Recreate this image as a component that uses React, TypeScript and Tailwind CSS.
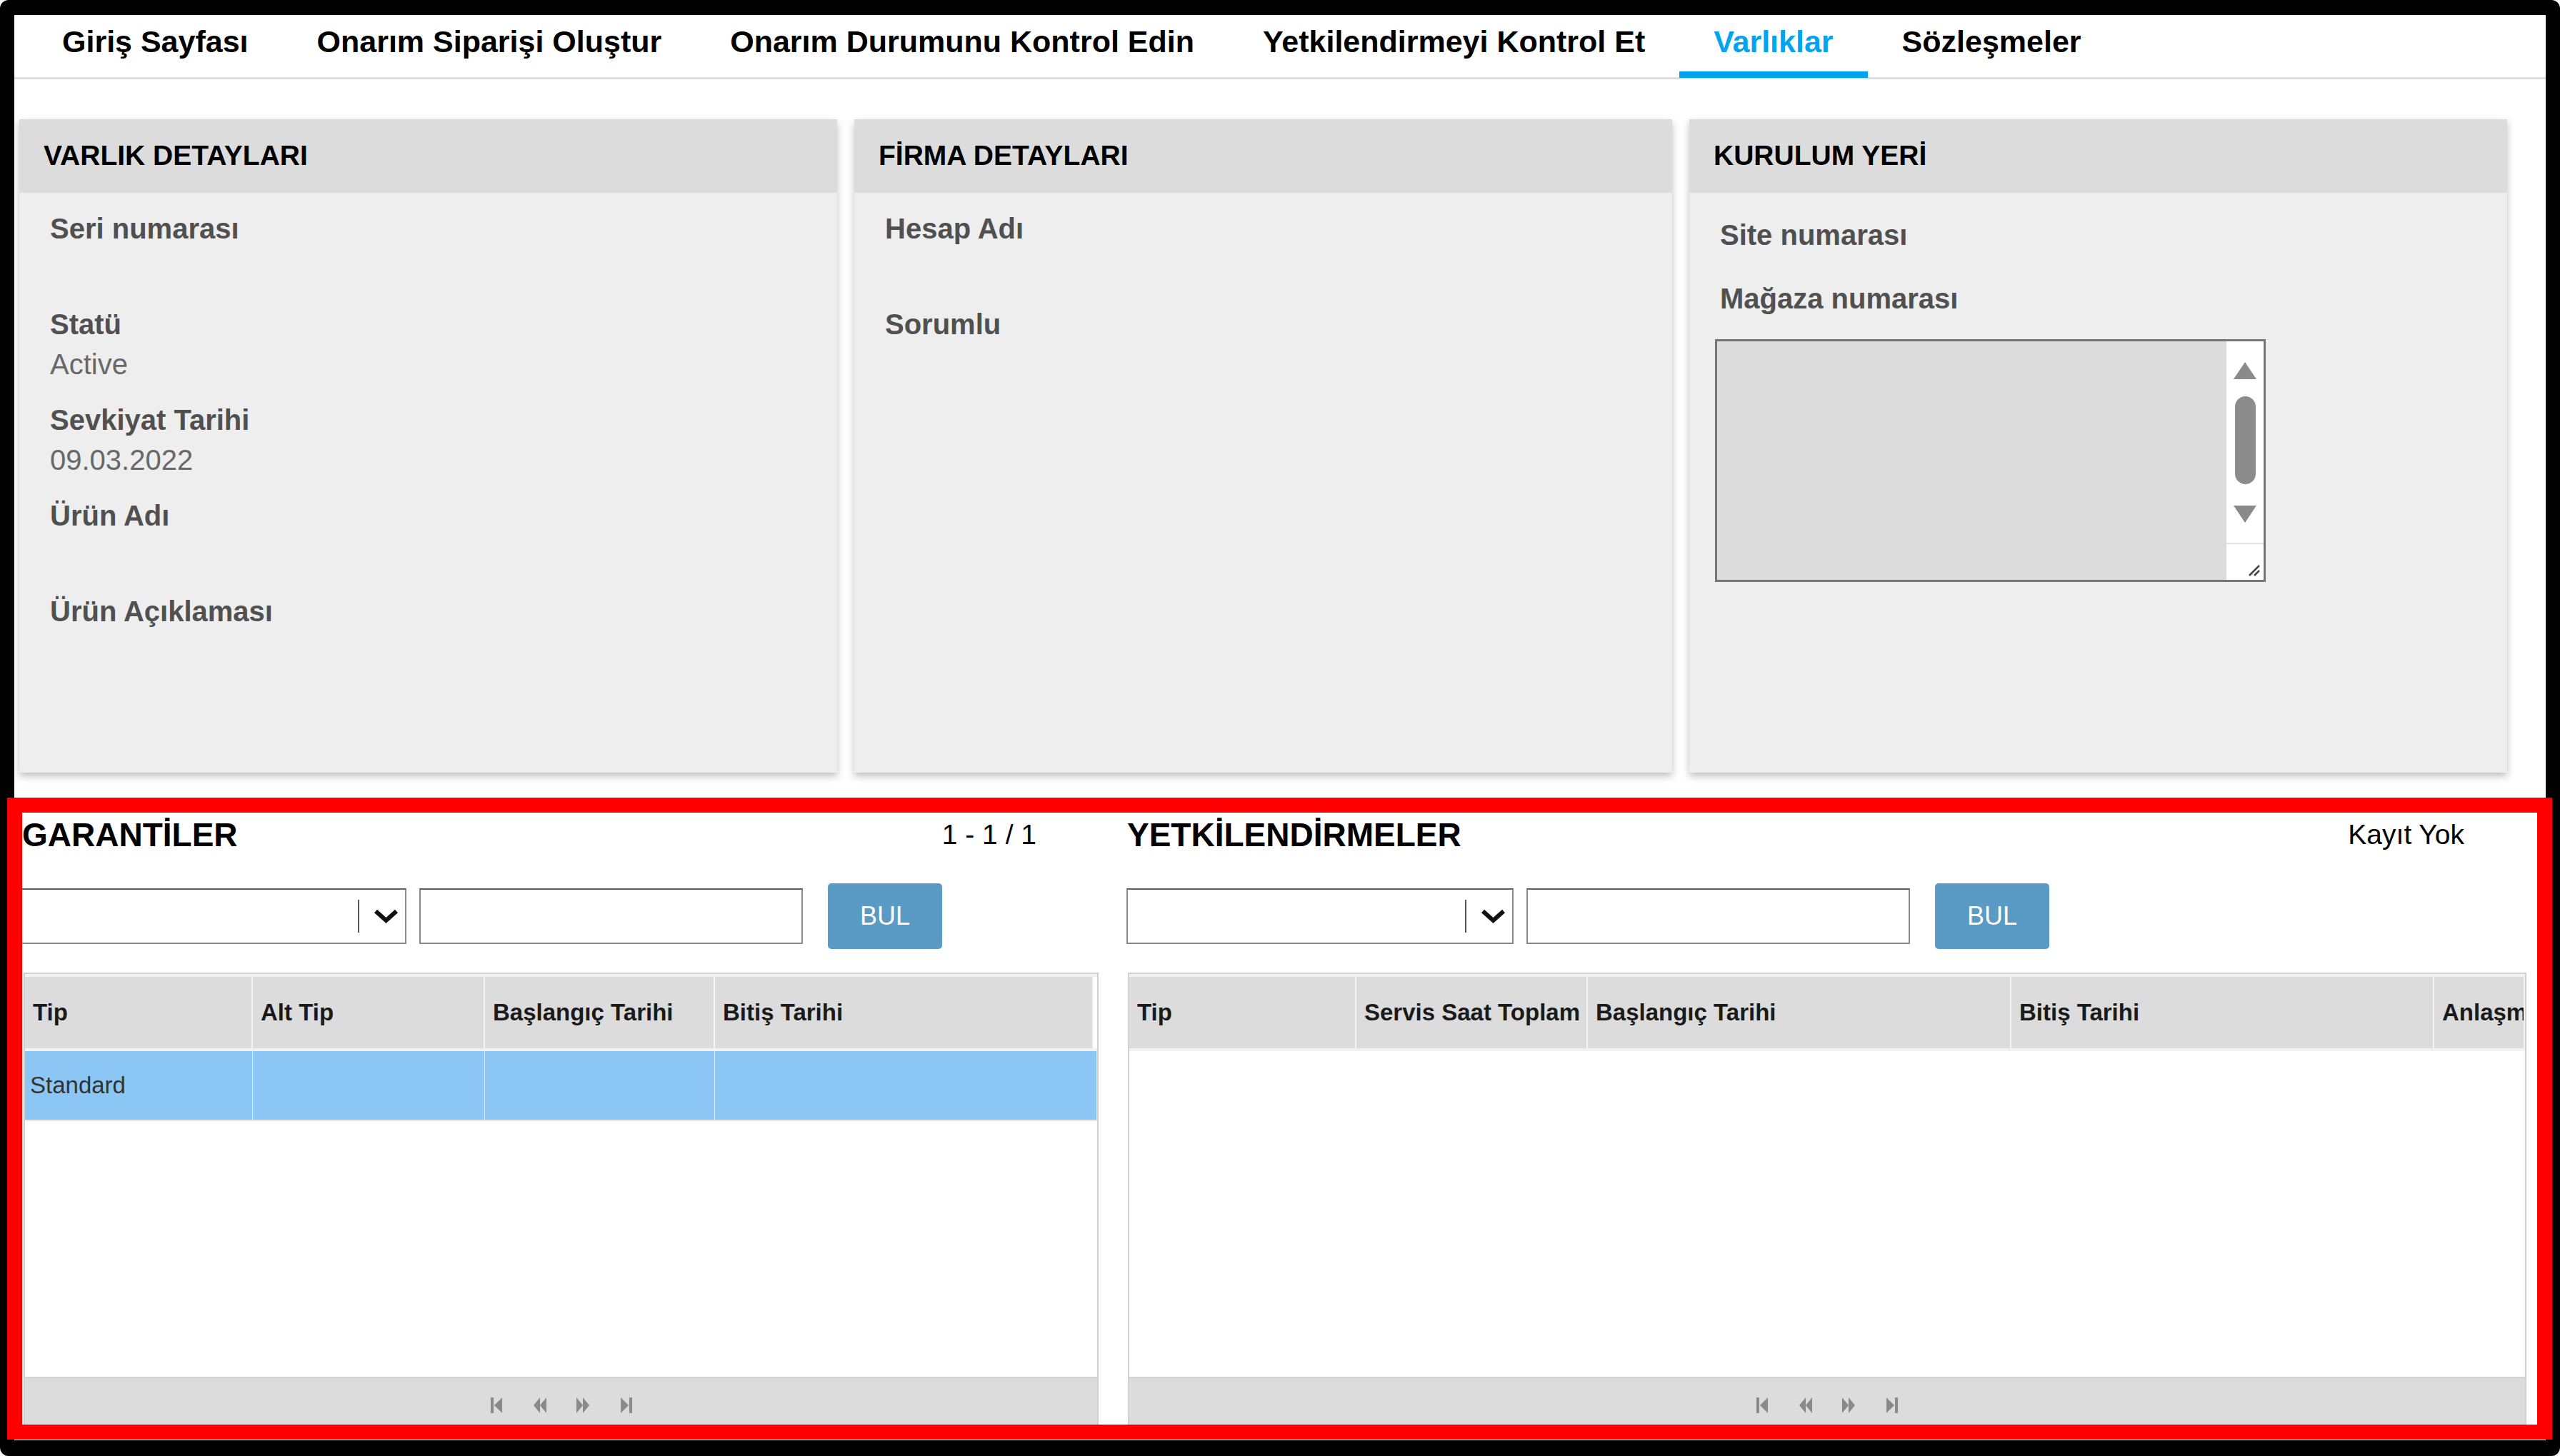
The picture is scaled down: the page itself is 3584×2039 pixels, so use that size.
import React from 'react';

const tabs = [
  'Giriş Sayfası',
  'Onarım Siparişi Oluştur',
  'Onarım Durumunu Kontrol Edin',
  'Yetkilendirmeyi Kontrol Et',
  'Varlıklar',
  'Sözleşmeler',
];

const NavTab = ({ label, active }: { label: string; active?: boolean }) => (
  <div className="relative flex h-full items-center px-[48px] pb-[12px]">
    <span className={`whitespace-nowrap text-[43px] font-bold leading-none ${active ? 'text-[#03a4ef]' : 'text-black'}`}>
      {label}
    </span>
    {active && <div className="absolute right-0 bottom-[-1px] left-0 h-[9px] bg-[#03a4ef]" />}
  </div>
);

const Card = ({ title, children }: { title: string; children: React.ReactNode }) => (
  <div className="flex w-[1145px] flex-col shadow-[0_5px_10px_rgba(0,0,0,0.25)]">
    <div className="flex h-[103px] shrink-0 items-center bg-[#dcdcdc] pl-[34px] text-[39px] font-bold text-black">
      {title}
    </div>
    <div className="flex-1 bg-[#eeeeee]">{children}</div>
  </div>
);

const Field = ({ label, value }: { label: string; value?: string }) => (
  <div className="mb-[22px]">
    <div className="h-[54px] whitespace-nowrap text-[40px] font-bold leading-[54px] text-[#505050]">{label}</div>
    <div className="h-[58px] whitespace-nowrap text-[40px] leading-[58px] text-[#686868]">{value}</div>
  </div>
);

const ChevronDown = () => (
  <svg className="ml-[18px]" width="39" height="22" viewBox="0 0 39 22">
    <polyline points="5,4 19.5,17 34,4" fill="none" stroke="#111" strokeWidth="6" />
  </svg>
);

const PagerIcon = ({ kind }: { kind: 'first' | 'prev' | 'next' | 'last' }) => (
  <svg width="24" height="24" viewBox="0 0 24 24" fill="#8a8a8a">
    {kind === 'first' && (
      <>
        <rect x="3" y="1" width="4" height="22" />
        <polygon points="19,1 8,12 19,23" />
      </>
    )}
    {kind === 'prev' && (
      <>
        <polygon points="12,1 3,12 12,23" />
        <polygon points="21,1 12,12 21,23" />
      </>
    )}
    {kind === 'next' && (
      <>
        <polygon points="3,1 12,12 3,23" />
        <polygon points="12,1 21,12 12,23" />
      </>
    )}
    {kind === 'last' && (
      <>
        <polygon points="5,1 16,12 5,23" />
        <rect x="17" y="1" width="4" height="22" />
      </>
    )}
  </svg>
);

type Col = { label: string; w: string };

const Section = ({
  title,
  status,
  width,
  titleIndent,
  gridIndent,
  cols,
  rows,
}: {
  title: string;
  status: string;
  width: string;
  titleIndent: string;
  gridIndent: string;
  cols: Col[];
  rows: string[][];
}) => (
  <div className={`flex flex-col ${width}`}>
    <div className="flex h-[78px] shrink-0 items-center justify-between pr-[87px]">
      <span className={`text-[46px] font-bold text-black ${titleIndent}`}>{title}</span>
      <span className="text-[39px] text-black">{status}</span>
    </div>

    <div className="mt-[29px] flex h-[92px] shrink-0 items-center">
      <div className="flex h-[78px] w-[542px] items-center justify-end border-2 border-[#8a8a8a] border-t-[#5f5f5f] bg-white pr-[7px]">
        <div className="h-[46px] w-[2px] bg-[#555555]" />
        <ChevronDown />
      </div>
      <div className="ml-[18px] h-[78px] w-[537px] border-2 border-[#8a8a8a] border-t-[#5f5f5f] bg-white" />
      <button className="ml-[35px] flex h-[92px] w-[160px] items-center justify-center rounded-[5px] bg-[#5a9bc6] text-[36px] text-white">
        BUL
      </button>
    </div>

    <div className={`mt-[33px] flex flex-1 flex-col border-2 border-[#d0d0d0] bg-white ${gridIndent}`}>
      <div className="flex h-[108px] shrink-0 border-y-4 border-[#f2f2f2] bg-white">
        {cols.map((c, i) => (
          <div
            key={i}
            className={`flex h-full items-center overflow-hidden whitespace-nowrap border-r-2 border-[#f4f4f4] bg-[#dcdcdc] pl-[11px] text-[33px] font-bold text-[#1a1a1a] ${c.w}`}
          >
            {c.label}
          </div>
        ))}
      </div>
      {rows.map((r, ri) => (
        <div key={ri} className="flex h-[98px] shrink-0 border-b-2 border-[#e6e6e6] bg-[#8cc6f4]">
          {cols.map((c, ci) => (
            <div
              key={ci}
              className={`flex h-full items-center border-r border-[#dbeafc] pl-[7px] text-[33px] text-[#333333] ${ci === cols.length - 1 ? 'flex-1' : c.w}`}
            >
              {r[ci]}
            </div>
          ))}
        </div>
      ))}
      <div className="flex-1" />
      <div className="flex h-[78px] shrink-0 items-center justify-center gap-[36px] border-t-2 border-[#d2d2d2] bg-[#dcdcdc]">
        <PagerIcon kind="first" />
        <PagerIcon kind="prev" />
        <PagerIcon kind="next" />
        <PagerIcon kind="last" />
      </div>
    </div>
  </div>
);

const App = () => {
  const warrantyCols: Col[] = [
    { label: 'Tip', w: 'w-[319px]' },
    { label: 'Alt Tip', w: 'w-[325px]' },
    { label: 'Başlangıç Tarihi', w: 'w-[322px]' },
    { label: 'Bitiş Tarihi', w: 'w-[530px]' },
  ];
  const authCols: Col[] = [
    { label: 'Tip', w: 'w-[318px]' },
    { label: 'Servis Saat Toplam', w: 'w-[324px]' },
    { label: 'Başlangıç Tarihi', w: 'w-[593px]' },
    { label: 'Bitiş Tarihi', w: 'w-[592px]' },
    { label: 'Anlaşma', w: 'flex-1' },
  ];

  return (
    <div className="relative h-[2039px] w-[3584px] overflow-hidden rounded-[12px] bg-black pt-[21px] pr-[20px] pb-[22px] pl-[20px] font-['Liberation_Sans',Arial,sans-serif]">
      <div className="flex h-full flex-col bg-white">
        {/* top navigation */}
        <div className="flex h-[90px] shrink-0 border-b-[3px] border-[#dedede] pl-[19px]">
          {tabs.map((t) => (
            <NavTab key={t} label={t} active={t === 'Varlıklar'} />
          ))}
        </div>

        {/* detail cards */}
        <div className="mt-[56px] flex h-[915px] shrink-0 gap-[24px] pl-[7px]">
          <Card title="VARLIK DETAYLARI">
            <div className="pt-[23px] pl-[43px]">
              <Field label="Seri numarası" />
              <Field label="Statü" value="Active" />
              <Field label="Sevkiyat Tarihi" value="09.03.2022" />
              <Field label="Ürün Adı" />
              <Field label="Ürün Açıklaması" />
            </div>
          </Card>
          <Card title="FİRMA DETAYLARI">
            <div className="pt-[23px] pl-[43px]">
              <Field label="Hesap Adı" />
              <Field label="Sorumlu" />
            </div>
          </Card>
          <Card title="KURULUM YERİ">
            <div className="flex flex-col pt-[32px] pl-[36px]">
              <div className="h-[54px] pl-[7px] text-[40px] font-bold leading-[54px] text-[#505050]">Site numarası</div>
              <div className="mt-[35px] h-[54px] pl-[7px] text-[40px] font-bold leading-[54px] text-[#505050]">Mağaza numarası</div>
              <div className="mt-[30px] flex h-[340px] w-[771px] border-[3px] border-[#767676] bg-[#dcdcdc]">
                <div className="flex-1" />
                <div className="flex w-[52px] flex-col bg-white">
                  <div className="flex flex-1 flex-col items-center pt-[28px]">
                    <svg width="34" height="26" viewBox="0 0 34 26">
                      <polygon points="17,1 33,25 1,25" fill="#8a8a8a" />
                    </svg>
                    <div className="mt-[23px] h-[123px] w-[29px] rounded-full bg-[#8c8c8c]" />
                    <svg className="mt-[29px]" width="34" height="26" viewBox="0 0 34 26">
                      <polygon points="1,1 33,1 17,25" fill="#8a8a8a" />
                    </svg>
                  </div>
                  <div className="flex h-[52px] items-end justify-end border-t-2 border-[#e2e2e2] pr-[4px] pb-[4px]">
                    <svg width="20" height="20" viewBox="0 0 20 20">
                      <line x1="18" y1="4" x2="4" y2="18" stroke="#444" strokeWidth="2.5" />
                      <line x1="18" y1="11" x2="11" y2="18" stroke="#444" strokeWidth="2.5" />
                    </svg>
                  </div>
                </div>
              </div>
            </div>
          </Card>
        </div>

        {/* lists */}
        <div className="mt-[48px] flex flex-1 gap-[39px] pb-[9px] pl-[7px]">
          <Section
            title="GARANTİLER"
            status="1 - 1 / 1"
            width="w-[1511px]"
            titleIndent="pl-[4px]"
            gridIndent="ml-[6px]"
            cols={warrantyCols}
            rows={[['Standard', '', '', '']]}
          />
          <Section
            title="YETKİLENDİRMELER"
            status="Kayıt Yok"
            width="w-[1960px]"
            titleIndent="pl-[1px]"
            gridIndent="ml-[2px]"
            cols={authCols}
            rows={[]}
          />
        </div>
      </div>

      {/* red highlight frame */}
      <div className="pointer-events-none absolute top-[1117px] left-[10px] h-[899px] w-[3563px] border-[21px] border-[#ff0000]" />
    </div>
  );
};

export default App;
